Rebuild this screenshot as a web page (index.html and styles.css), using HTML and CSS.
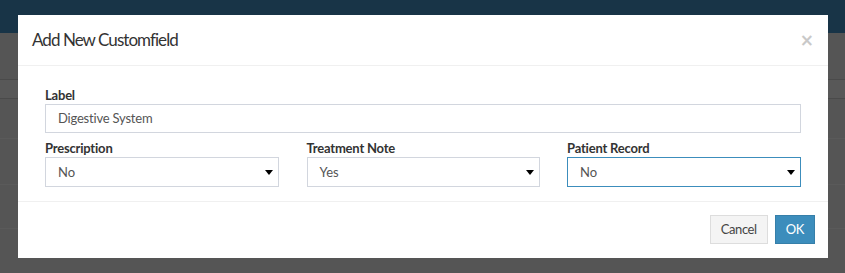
FILE: index.html
```html
<!DOCTYPE html>
<html>
<head>
<meta charset="utf-8">
<link rel="stylesheet" href="styles.css">
</head>
<body>
<div class="page">
  <div class="topbar"></div>
  <div class="bg-area bg-a"></div>
  <div class="bg-area bg-b"></div>
  <div class="bg-area bg-c"></div>
  <div class="bg-area bg-d"></div>
  <div class="bg-area bg-e"></div>
  <div class="bg-area bg-f"></div>
</div>
<div class="modal">
  <div class="modal-header">
    <h4 class="modal-title">Add New Customfield</h4>
    <span class="close">×</span>
  </div>
  <div class="modal-body">
    <div class="form-group">
      <label class="field-label">Label</label>
      <div class="input">Digestive System</div>
    </div>
    <div class="row">
      <div class="form-group">
        <label class="field-label">Prescription</label>
        <div class="select"><span>No</span><i class="caret"></i></div>
      </div>
      <div class="form-group">
        <label class="field-label">Treatment Note</label>
        <div class="select"><span>Yes</span><i class="caret"></i></div>
      </div>
      <div class="form-group">
        <label class="field-label">Patient Record</label>
        <div class="select focus"><span>No</span><i class="caret"></i></div>
      </div>
    </div>
  </div>
  <div class="modal-footer">
    <button class="btn btn-default">Cancel</button>
    <button class="btn btn-primary">OK</button>
  </div>
</div>
</body>
</html>
```

FILE: styles.css
```css
* { box-sizing: border-box; }
html, body { margin: 0; padding: 0; }
body {
  background: #555555;
  font-family: Lato, "Open Sans", sans-serif;
  width: 845px;
  height: 273px;
  overflow: hidden;
  position: relative;
}
.page { display: flex; flex-direction: column; }
.topbar { height: 33px; background: #183447; }
.bg-area { background: #555555; }
.bg-a { height: 47px; border-bottom: 1px solid #4a4a4a; }
.bg-b { height: 19px; background: #585858; border-bottom: 1px solid #4a4a4a; }
.bg-c { height: 40px; border-bottom: 1px solid #5a5a5a; }
.bg-d { height: 46px; border-bottom: 1px solid #5a5a5a; }
.bg-e { height: 44px; border-bottom: 1px solid #5a5a5a; }
.bg-f { height: 44px; }

.modal {
  position: absolute;
  left: 18px;
  top: 15px;
  width: 810px;
  background: #fff;
}
.modal-header {
  display: flex;
  justify-content: space-between;
  align-items: center;
  padding: 15px 14px 15px 14px;
  border-bottom: 1px solid #f0f0f0;
  height: 51px;
}
.modal-title {
  margin: 0;
  font-size: 17px;
  font-weight: 400;
  line-height: 20px;
  letter-spacing: -0.95px;
  color: #333;
}
.close {
  font-family: "DejaVu Sans", sans-serif;
  font-size: 17px;
  line-height: 20px;
  font-weight: bold;
  color: #c9c9c9;
  margin-right: 0;
}
.modal-body {
  padding: 20px 27px 14px 27px;
}
.form-group { display: flex; flex-direction: column; }
.field-label {
  font-size: 13px;
  font-weight: 700;
  line-height: 18px;
  letter-spacing: -0.2px;
  color: #333;
}
.input {
  height: 29px;
  border: 1px solid #d2d6de;
  padding: 0 12px;
  font-size: 13px;
  line-height: 27px;
  letter-spacing: -0.2px;
  color: #555;
}
.row {
  display: grid;
  grid-template-columns: 234px 233px 234px;
  column-gap: 27.5px;
  margin-top: 6px;
}
.select {
  height: 30px;
  border: 1px solid #d2d6de;
  padding: 0 5px 0 12px;
  display: flex;
  align-items: center;
  justify-content: space-between;
  font-size: 13px;
  color: #555;
}
.select.focus { border-color: #3c8dbc; }
.caret {
  width: 0;
  height: 0;
  border-top: 5px solid #000;
  border-left: 4px solid transparent;
  border-right: 4px solid transparent;
}
.modal-footer {
  border-top: 1px solid #f0f0f0;
  padding: 13px 13px 14px 13px;
  display: flex;
  justify-content: flex-end;
  gap: 7px;
}
.btn {
  height: 29px;
  font-family: Lato, "Open Sans", sans-serif;
  font-size: 13px;
  letter-spacing: -0.4px;
  padding: 0 10px;
  border: 1px solid;
  border-radius: 0;
  line-height: 27px;
}
.btn-default { background: #f4f4f4; border-color: #dddddd; color: #444; }
.btn-primary { background: #3c8dbc; border-color: #367fa9; color: #fff; }
```
